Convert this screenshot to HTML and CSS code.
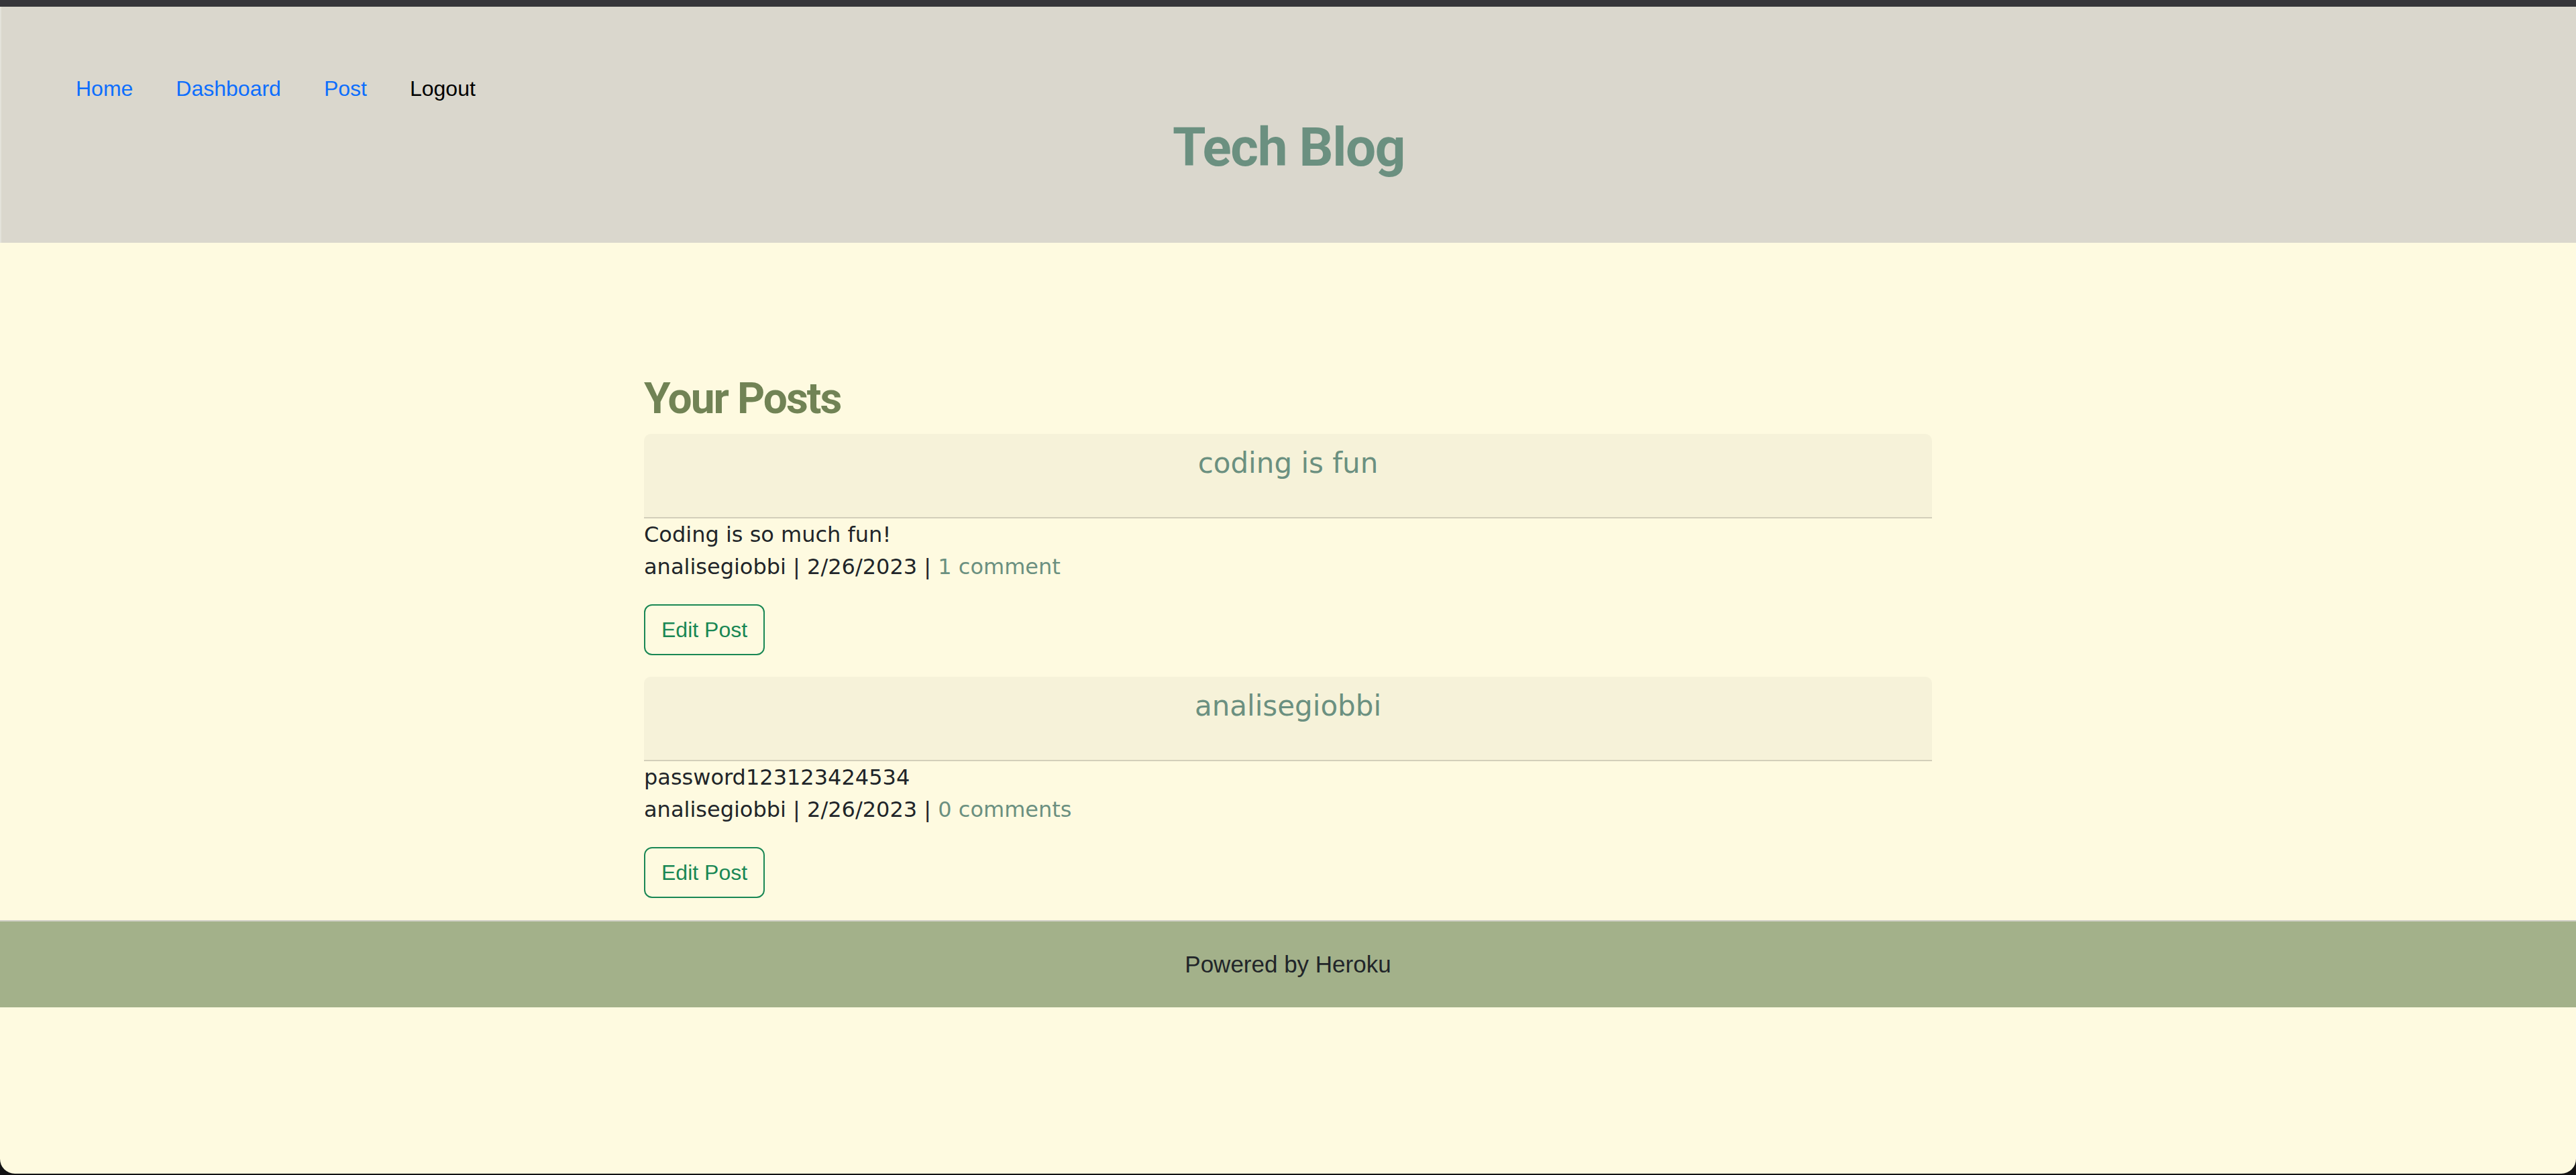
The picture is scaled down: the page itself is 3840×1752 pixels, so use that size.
FILE: index.html
```html
<!DOCTYPE html>
<html lang="en">
<head>
<meta charset="utf-8">
<title>Tech Blog</title>
<link rel="stylesheet" href="styles.css">
</head>
<body>
<div class="topbar"></div>
<div class="window">
  <header class="site-header">
    <nav class="nav">
      <a class="nav-link" href="#">Home</a>
      <a class="nav-link" href="#">Dashboard</a>
      <a class="nav-link" href="#">Post</a>
      <a class="nav-link nav-logout" href="#">Logout</a>
    </nav>
    <h1 class="brand">Tech Blog</h1>
  </header>
  <main class="main">
    <section class="posts">
      <h2 class="posts-title">Your Posts</h2>
      <article class="post">
        <div class="post-head"><h5 class="post-title">coding is fun</h5></div>
        <p class="post-body">Coding is so much fun!<br>analisegiobbi | 2/26/2023 | <a class="comments" href="#">1 comment</a></p>
        <button class="btn-edit" type="button">Edit Post</button>
      </article>
      <article class="post">
        <div class="post-head"><h5 class="post-title">analisegiobbi</h5></div>
        <p class="post-body">password123123424534<br>analisegiobbi | 2/26/2023 | <a class="comments" href="#">0 comments</a></p>
        <button class="btn-edit" type="button">Edit Post</button>
      </article>
    </section>
  </main>
  <footer class="site-footer">Powered by Heroku</footer>
</div>
</body>
</html>
```

FILE: styles.css
```css
html, body {
  margin: 0;
  padding: 0;
}
body {
  background: #121214;
  height: 1752px;
  overflow: hidden;
  font-family: "DejaVu Sans", sans-serif;
  color: #212529;
}
.topbar {
  height: 10px;
  background: #36363a;
}
.window {
  height: 1740px;
  background: #fefae0;
  border-radius: 0 0 22px 22px;
  overflow: hidden;
}
.site-header {
  height: 352px;
  box-sizing: border-box;
  padding-top: 82px;
  background: #dad7cd;
  border-left: 2px solid #e4e2da;
}
.nav {
  display: flex;
  padding-left: 79px;
}
.nav-link {
  font-family: "Liberation Sans", Arial, sans-serif;
  font-size: 32px;
  line-height: 48px;
  padding: 16px 32px;
  color: #0d6efd;
  text-decoration: none;
}
.nav-logout {
  color: #000;
}
.brand {
  margin: 0;
  text-align: center;
  font-family: Roboto, "Liberation Sans", sans-serif;
  font-weight: 700;
  font-size: 80px;
  line-height: 96px;
  letter-spacing: -1.4px;
  color: #6b9080;
}
.main {
  padding-top: 194px;
  padding-bottom: 33px;
}
.posts {
  width: 1920px;
  margin: 0 auto;
}
.posts-title {
  margin: 0 0 14px;
  font-family: Roboto, "Liberation Sans", sans-serif;
  font-weight: 700;
  font-size: 64px;
  line-height: 77px;
  letter-spacing: -2px;
  color: #718355;
}
.post {
  margin-bottom: 32px;
}
.post:last-child {
  margin-bottom: 0;
}
.post-head {
  height: 124px;
  box-sizing: content-box;
  background: #f6f2d9;
  border-bottom: 2px solid #d3cfba;
  border-radius: 10px 10px 0 0;
  padding: 0 32px;
}
.post-title {
  margin: 0;
  padding-top: 19px;
  text-align: center;
  font-family: "DejaVu Sans", sans-serif;
  font-weight: 400;
  font-size: 42px;
  line-height: 49px;
  color: #6b9080;
}
.post-body {
  margin: 0 0 32px;
  font-size: 32px;
  line-height: 48px;
  color: #212529;
}
.comments {
  color: #6b9080;
  text-decoration: none;
}
.btn-edit {
  display: block;
  margin: 0;
  font-family: "Liberation Sans", Arial, sans-serif;
  font-size: 32px;
  line-height: 48px;
  padding: 12px 24px;
  color: #198754;
  background: transparent;
  border: 2px solid #198754;
  border-radius: 12px;
}
.site-footer {
  border-top: 2px solid #d0cfc6;
  background: #a3b18a;
  height: 130px;
  box-sizing: border-box;
  padding-top: 40px;
  text-align: center;
  font-family: "Liberation Sans", Arial, sans-serif;
  font-size: 35px;
  line-height: 48px;
  color: #212529;
}
```
